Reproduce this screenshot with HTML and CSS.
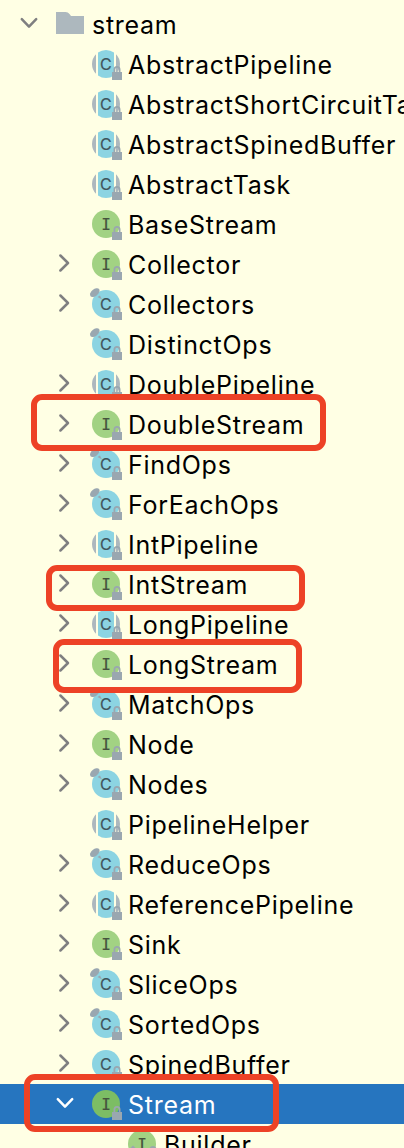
FILE: index.html
```
<!DOCTYPE html>
<html lang="en">
<head>
    <meta charset="UTF-8">
    <meta name="viewport" content="width=device-width, initial-scale=1.0">
    <title>java.util.stream</title>
    <link rel="stylesheet" href="styles.css">
</head>
<body>
    <!-- Shared icon shapes -->
    <svg class="defs" aria-hidden="true">
        <symbol id="chevron-right" viewBox="0 0 20 20">
            <path d="M6.4 2.5 14 10 6.4 17.5" fill="none" stroke="currentColor" stroke-width="2.5" stroke-linecap="round" stroke-linejoin="round"/>
        </symbol>
        <symbol id="chevron-down" viewBox="0 0 20 20">
            <path d="M2.8 6.2 10 13.6 17.2 6.2" fill="none" stroke="currentColor" stroke-width="2.5" stroke-linecap="round" stroke-linejoin="round"/>
        </symbol>
        <symbol id="folder" viewBox="0 0 28 22">
            <path d="M0 0H9.5Q12 0 13.5 2L15 4H28V22H0Z" fill="#adb8be"/>
        </symbol>
        <symbol id="lock" viewBox="0 0 10 14">
            <path d="M2.4 7V3.5a2.6 2.6 0 0 1 5.2 0V7" fill="none" stroke="#9aa7b0" stroke-width="1.8"/>
            <rect y="6" width="10" height="8" fill="#9aa7b0"/>
        </symbol>
        <symbol id="interface" viewBox="0 0 36 36">
            <circle class="disc" cx="18" cy="18" r="14"/>
            <text class="letter mono" x="18" y="24">I</text>
            <use href="#lock" x="24" y="20" width="10" height="14"/>
        </symbol>
        <symbol id="static-interface" viewBox="0 0 36 36">
            <use href="#interface" width="36" height="36"/>
            <path d="M9 19.5 14.5 25 9 30.5 3.5 25Z" fill="#9aa7b0"/>
        </symbol>
        <symbol id="class" viewBox="0 0 36 36">
            <circle cx="18" cy="18" r="14" fill="#8cd4e2"/>
            <text class="letter" x="17.8" y="23.6">C</text>
            <use href="#lock" x="24" y="20" width="10" height="14"/>
        </symbol>
        <symbol id="abstract" viewBox="0 0 36 36">
            <path d="M8 8.2a14 14 0 0 0 0 19.6ZM28 8.2a14 14 0 0 1 0 19.6Z" fill="#adb8be"/>
            <path d="M10 6.5a14 14 0 0 1 16 0v23a14 14 0 0 1-16 0Z" fill="#8cd4e2"/>
            <text class="letter" x="17.8" y="23.6">C</text>
            <use href="#lock" x="24" y="20" width="10" height="14"/>
        </symbol>
        <symbol id="final" viewBox="0 0 36 36">
            <circle cx="18" cy="18" r="14" fill="#8cd4e2"/>
            <ellipse cx="6.8" cy="6.6" rx="5.6" ry="3.3" transform="rotate(-40 6.8 6.6)" fill="#9aa7b0"/>
            <path d="M9.5 11 12 9.5 14 13.5Z" fill="#9aa7b0"/>
            <text class="letter" x="17.8" y="23.6">C</text>
            <use href="#lock" x="24" y="20" width="10" height="14"/>
        </symbol>
    </svg>

    <div class="tree" id="tree"></div>

    <div class="mark mark-double"></div>
    <div class="mark mark-int"></div>
    <div class="mark mark-long"></div>
    <div class="mark mark-stream"></div>

    <script src="tree.js"></script>
</body>
</html>
```
FILE: styles.css
```
body {
    margin: 0;
    height: 1148px;
    position: relative;
    overflow: hidden;
    background-color: #ffffe4;
    color: #000;
    font-family: Inter, "Liberation Sans", sans-serif;
    font-size: 25px;
}
.defs {
    position: absolute;
    width: 0;
    height: 0;
}
.tree {
    padding-top: 4px;
}
.row {
    display: flex;
    align-items: center;
    height: 40px;
    padding-left: 54px;
    white-space: nowrap;
    overflow: hidden;
}
.row.root {
    padding-left: 19px;
}
.row.child {
    padding-left: 90px;
}
.row.selected {
    background-color: #2675bf;
    color: #fff;
}
.arrow {
    flex: none;
    width: 20px;
    height: 20px;
    margin-top: -2px;
    color: #7f7f80;
}
.selected .arrow {
    color: #fff;
    margin-left: 1px;
    margin-right: -1px;
}
.icon {
    flex: none;
    width: 36px;
    height: 36px;
    margin-left: 14px;
    fill: #a2d283;
}
.selected .icon {
    fill: #7cbd64;
}
.folder {
    flex: none;
    width: 28px;
    height: 22px;
    margin: -2px 0 0 17px;
}
.letter {
    font-family: Inter, sans-serif;
    font-size: 16px;
    text-anchor: middle;
    fill: #41545b;
    stroke: #41545b;
    stroke-width: 0.2px;
}
.letter.mono {
    font-family: "DejaVu Sans Mono", monospace;
    fill: #45523d;
    stroke: #45523d;
}
.label {
    margin-left: 4px;
    line-height: 40px;
    letter-spacing: 0.72px;
    position: relative;
    top: 1px;
}
.root .label {
    margin-left: 8px;
}
.mark {
    position: absolute;
    box-sizing: border-box;
    border: 6px solid #ed4226;
    border-radius: 11px;
}
.mark-double {
    left: 31px;
    top: 394px;
    width: 295px;
    height: 57px;
}
.mark-int {
    left: 46px;
    top: 565px;
    width: 259px;
    height: 46px;
}
.mark-long {
    left: 53px;
    top: 639px;
    width: 249px;
    height: 54px;
}
.mark-stream {
    left: 24px;
    top: 1074px;
    width: 255px;
    height: 58px;
}
```
FILE: tree.js
```
// [name, icon, arrow, row class]
const rows = [
    ["stream", "folder", "down", "root"],
    ["AbstractPipeline", "abstract"],
    ["AbstractShortCircuitTask", "abstract"],
    ["AbstractSpinedBuffer", "abstract"],
    ["AbstractTask", "abstract"],
    ["BaseStream", "interface"],
    ["Collector", "interface", "right"],
    ["Collectors", "final", "right"],
    ["DistinctOps", "final"],
    ["DoublePipeline", "abstract", "right"],
    ["DoubleStream", "interface", "right"],
    ["FindOps", "final", "right"],
    ["ForEachOps", "final", "right"],
    ["IntPipeline", "abstract", "right"],
    ["IntStream", "interface", "right"],
    ["LongPipeline", "abstract", "right"],
    ["LongStream", "interface", "right"],
    ["MatchOps", "final", "right"],
    ["Node", "interface", "right"],
    ["Nodes", "final", "right"],
    ["PipelineHelper", "abstract"],
    ["ReduceOps", "final", "right"],
    ["ReferencePipeline", "abstract", "right"],
    ["Sink", "interface", "right"],
    ["SliceOps", "final", "right"],
    ["SortedOps", "final", "right"],
    ["SpinedBuffer", "class", "right"],
    ["Stream", "interface", "down", "selected"],
    ["Builder", "static-interface", "", "child"]
];

document.getElementById("tree").innerHTML = rows.map(([name, icon, arrow, cls]) => `
    <div class="row ${cls || ""}">
        <svg class="arrow">${arrow ? `<use href="#chevron-${arrow}"/>` : ""}</svg>
        <svg class="${icon === "folder" ? "folder" : "icon"}"><use href="#${icon}"/></svg>
        <span class="label">${name}</span>
    </div>`).join("");
```
